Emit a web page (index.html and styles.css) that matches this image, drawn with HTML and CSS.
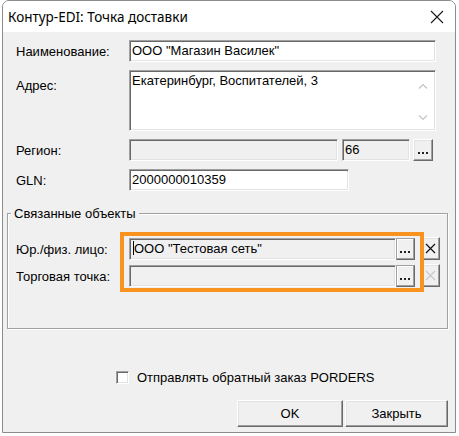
FILE: index.html
```html
<!DOCTYPE html>
<html lang="ru">
<head>
<meta charset="utf-8">
<title>Контур-EDI: Точка доставки</title>
<link rel="stylesheet" href="styles.css">
</head>
<body>
<div class="window">
  <div class="titlebar">
    <span class="title">Контур-EDI: Точка доставки</span>
    <svg class="close" width="14" height="14" viewBox="0 0 14 14"><path d="M1 1 L13 13 M13 1 L1 13" stroke="#1a1a1a" stroke-width="1.1" fill="none"/></svg>
  </div>
  <div class="content">
    <div class="form">
      <span class="lbl">Наименование:</span>
      <div class="field">ООО "Магазин Василек"</div>

      <span class="lbl lbl-top">Адрес:</span>
      <div class="field memo">
        <span class="memo-text">Екатеринбург, Воспитателей, 3</span>
        <div class="scroll">
          <svg width="10" height="6" viewBox="0 0 10 6"><path d="M1 5.5 L5 1.5 L9 5.5" stroke="#c4c4c4" stroke-width="1.2" fill="none"/></svg>
          <svg width="10" height="6" viewBox="0 0 10 6"><path d="M1 0.5 L5 4.5 L9 0.5" stroke="#c4c4c4" stroke-width="1.2" fill="none"/></svg>
        </div>
      </div>

      <span class="lbl">Регион:</span>
      <div class="region-row">
        <div class="field ro region"></div>
        <div class="field ro code">66</div>
        <button class="btn dots"><span class="dot"></span><span class="dot"></span><span class="dot"></span></button>
      </div>

      <span class="lbl">GLN:</span>
      <div class="field gln">2000000010359</div>
    </div>

    <div class="group">
      <span class="legend">Связанные объекты</span>
      <div class="group-grid">
        <span class="lbl">Юр./физ. лицо:</span>
        <div class="lookup">
          <div class="field ro lookup-field"><span class="caret"></span>ООО "Тестовая сеть"</div>
          <button class="btn dots small"><span class="dot"></span><span class="dot"></span><span class="dot"></span></button>
          <button class="btn xbtn"><svg width="11" height="11" viewBox="0 0 11 11"><path d="M1 1 L10 10 M10 1 L1 10" stroke="#111" stroke-width="1.2" fill="none"/></svg></button>
        </div>

        <span class="lbl">Торговая точка:</span>
        <div class="lookup">
          <div class="field ro lookup-field"></div>
          <button class="btn dots small"><span class="dot"></span><span class="dot"></span><span class="dot"></span></button>
          <button class="btn xbtn"><svg width="11" height="11" viewBox="0 0 11 11"><path d="M1 1 L10 10 M10 1 L1 10" stroke="#c8c8c8" stroke-width="1.2" fill="none"/></svg></button>
        </div>
        <div class="highlight"></div>
      </div>
    </div>

    <div class="check-row">
      <span class="checkbox"></span>
      <span class="check-label">Отправлять обратный заказ PORDERS</span>
    </div>

    <div class="buttons">
      <button class="btn action ok">OK</button>
      <button class="btn action close-btn">Закрыть</button>
    </div>
  </div>
</div>
</body>
</html>
```

FILE: styles.css
```css
html, body {
  margin: 0;
  padding: 0;
  background: #ffffff;
}

body {
  font-family: "Liberation Sans", Arial, sans-serif;
  font-size: 13px;
  color: #000;
  width: 459px;
  height: 436px;
  overflow: hidden;
}

.window {
  margin-left: 2px;
  width: 454px;
  height: 433px;
  box-sizing: border-box;
  border: 1px solid #8c8c8c;
  border-radius: 7px 7px 0 0;
  background: #f0f0f0;
  display: flex;
  flex-direction: column;
  overflow: hidden;
}

.titlebar {
  height: 31px;
  flex: none;
  background: #ffffff;
  display: flex;
  align-items: center;
  justify-content: space-between;
  padding: 0 11px 0 5px;
}

.title {
  font-family: "Noto Sans", "Open Sans", sans-serif;
  font-size: 13.5px;
  color: #000;
}

.close {
  display: block;
}

.content {
  flex: 1;
  display: flex;
  flex-direction: column;
  padding-top: 8px;
}

.form {
  display: grid;
  grid-template-columns: 113px 307px;
  grid-template-rows: 22px 61px 22px 22px;
  row-gap: 8px;
  padding-left: 13px;
}

.lbl {
  align-self: center;
  line-height: 15px;
  white-space: nowrap;
}

.lbl-top {
  align-self: start;
  padding-top: 8px;
}

.field {
  box-sizing: border-box;
  height: 22px;
  background: #ffffff;
  border: 1px solid;
  border-color: #a0a0a0 #ffffff #ffffff #a0a0a0;
  box-shadow: inset 1px 1px #696969, inset -1px -1px #e3e3e3;
  padding: 2px 2px 0 2px;
  line-height: 16px;
  white-space: nowrap;
  overflow: hidden;
}

.ro {
  background: #f0f0f0;
}

.memo {
  height: 61px;
  display: flex;
  padding-right: 3px;
}

.memo-text {
  flex: 1;
}

.scroll {
  width: 18px;
  display: flex;
  flex-direction: column;
  align-items: center;
  justify-content: space-between;
  padding: 10px 0 9px;
}

.scroll svg {
  display: block;
}

.region-row {
  display: flex;
  align-items: stretch;
}

.region {
  width: 209px;
}

.code {
  width: 68px;
  margin-left: 4px;
}

.btn {
  box-sizing: border-box;
  background: #f0f0f0;
  border: 1px solid;
  border-color: #ffffff #696969 #696969 #ffffff;
  box-shadow: inset -1px -1px #a0a0a0, inset 1px 1px #e3e3e3;
  font: inherit;
  color: #000;
  padding: 0;
  margin: 0;
  display: flex;
  align-items: center;
  justify-content: center;
}

.dots {
  width: 20px;
  height: 22px;
  margin-left: 3px;
  align-items: flex-end;
  gap: 2px;
  padding: 0 1px 6px 0;
}

.dot {
  display: block;
  width: 2px;
  height: 2px;
  background: #222;
}

.gln {
  width: 220px;
}

.group {
  position: relative;
  margin: 22px 7px 0 4px;
  border: 1px solid #a0a0a0;
  box-shadow: inset 1px 1px #ffffff, 1px 1px #ffffff;
  padding: 24px 0 41px 8px;
}

.legend {
  position: absolute;
  top: -8px;
  left: 3px;
  padding: 0 3px 0 3px;
  line-height: 15px;
  background: #f0f0f0;
}

.group-grid {
  position: relative;
  display: grid;
  grid-template-columns: 113px 311px;
  grid-template-rows: 22px 22px;
  row-gap: 5px;
}

.lookup {
  display: flex;
  align-items: stretch;
}

.lookup-field {
  width: 267px;
  padding-left: 3px;
}

.caret {
  display: inline-block;
  width: 1px;
  height: 14px;
  background: #000;
  vertical-align: -2px;
}

.dots.small {
  width: 19px;
  margin-left: 0;
  border-color: #a0a0a0 #696969 #696969 #a0a0a0;
  box-shadow: inset -1px -1px #a0a0a0, inset 1px 1px #ffffff;
}

.xbtn {
  width: 19px;
  height: 23px;
  margin-left: 6px;
  margin-top: -1px;
}

.xbtn svg {
  display: block;
}

.highlight {
  position: absolute;
  top: -6px;
  left: 104px;
  width: 304px;
  height: 60px;
  box-sizing: border-box;
  border: 4px solid #f7931e;
  pointer-events: none;
}

.check-row {
  margin-top: 41px;
  padding-left: 113px;
  display: flex;
  align-items: center;
  height: 15px;
}

.checkbox {
  box-sizing: border-box;
  width: 13px;
  height: 13px;
  background: #ffffff;
  border: 1px solid;
  border-color: #a0a0a0 #ffffff #ffffff #a0a0a0;
  box-shadow: inset 1px 1px #696969, inset -1px -1px #e3e3e3;
}

.check-label {
  margin-left: 8px;
  line-height: 15px;
}

.buttons {
  margin-top: 15px;
  display: flex;
  justify-content: flex-end;
  padding-right: 7px;
}

.action {
  height: 27px;
}

.ok {
  width: 106px;
  margin-right: 2px;
}

.close-btn {
  width: 103px;
}
```
